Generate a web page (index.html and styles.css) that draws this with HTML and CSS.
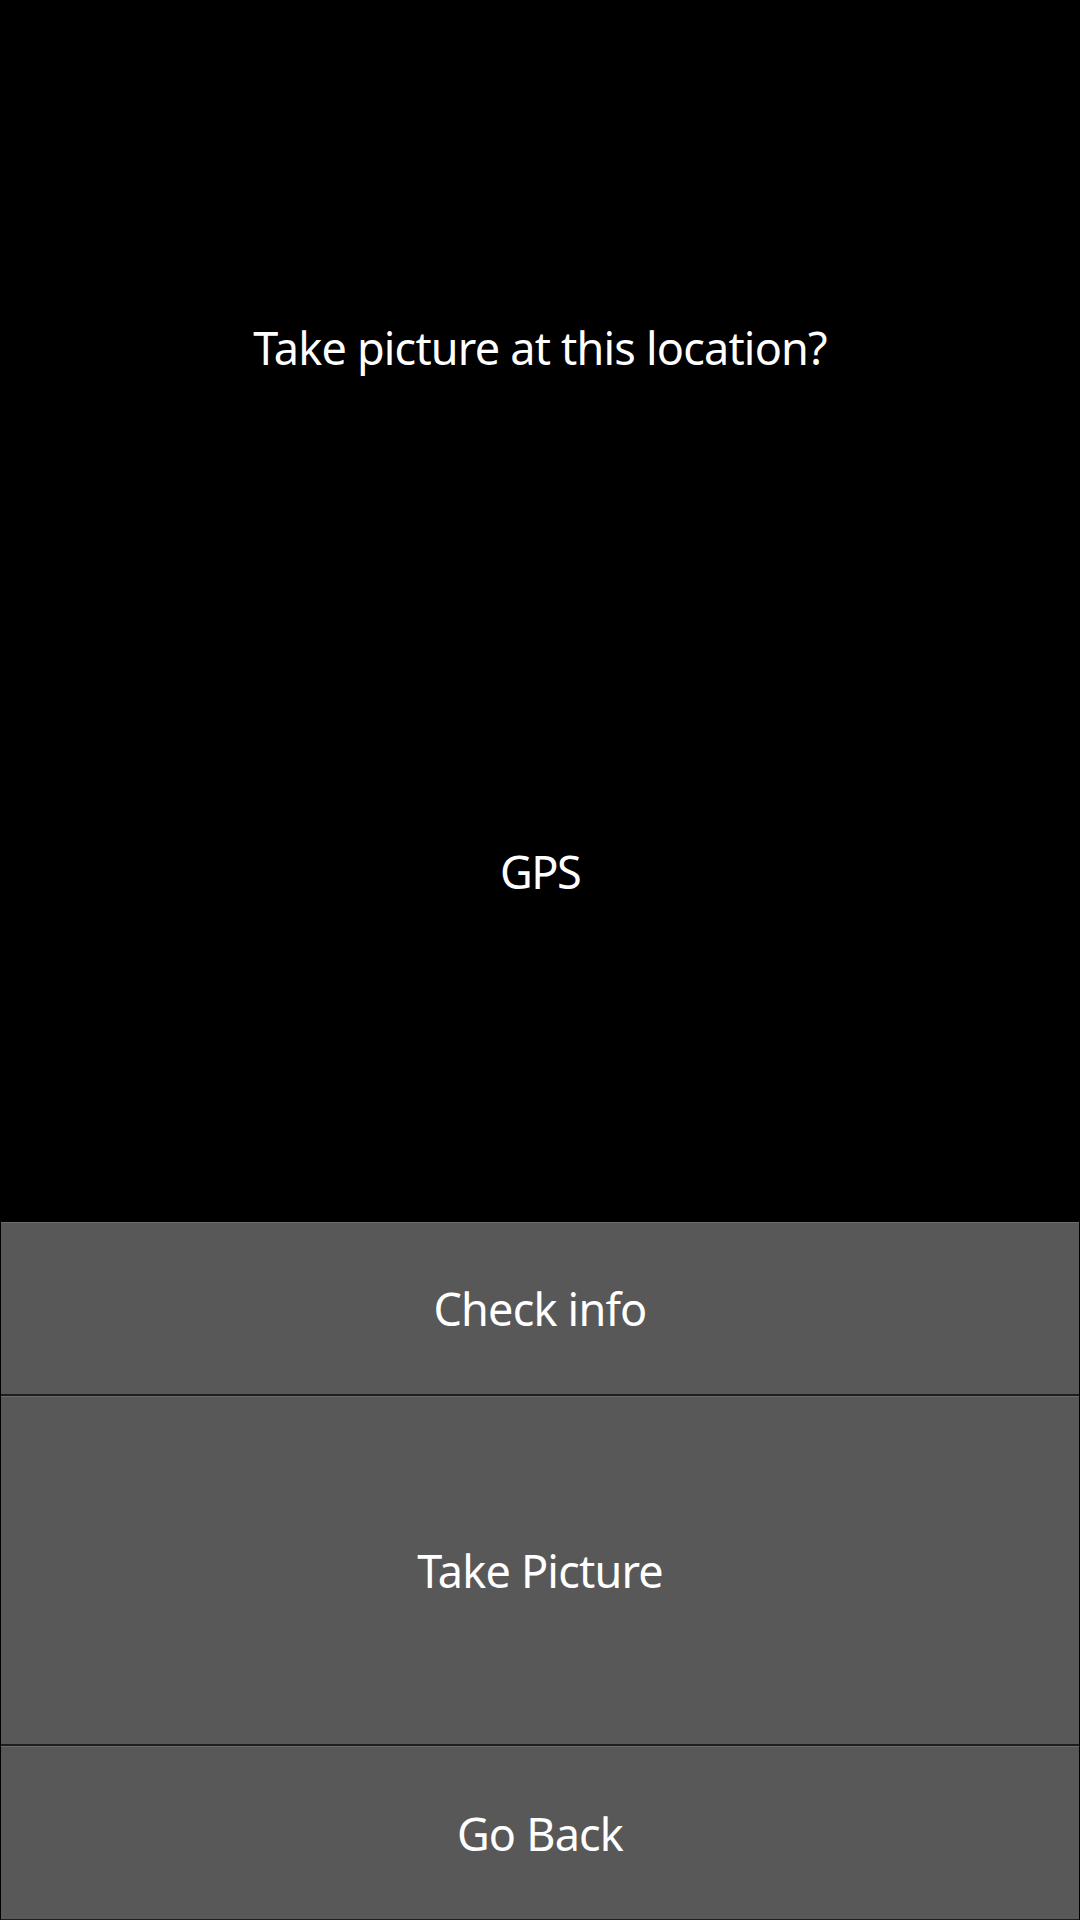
FILE: index.html
```html
<!DOCTYPE html>
<html>
<head>
<meta charset="utf-8">
<link rel="stylesheet" href="styles.css">
</head>
<body>
<div class="screen">
  <div class="info">
    <div class="title">Take picture at this location?</div>
    <div class="gps">GPS</div>
  </div>
  <div class="buttons">
    <div class="btn btn-small">Check info</div>
    <div class="btn btn-large">Take Picture</div>
    <div class="btn btn-small btn-last">Go Back</div>
  </div>
</div>
</body>
</html>
```
FILE: styles.css
```css
html, body {
  margin: 0;
  padding: 0;
  background: #000;
}
.screen {
  width: 1080px;
  height: 1920px;
  display: flex;
  flex-direction: column;
  font-family: "Noto Sans", "Open Sans", sans-serif;
  color: #fff;
  letter-spacing: -0.8px;
}
.info {
  height: 1222px;
  display: flex;
  flex-direction: column;
  align-items: center;
}
.title {
  font-size: 45px;
  line-height: 64px;
  margin-top: 316px;
}
.gps {
  font-size: 45px;
  line-height: 64px;
  margin-top: 460px;
  letter-spacing: -1.5px;
}
.buttons {
  display: flex;
  flex-direction: column;
  padding: 0 1px 0 1px;
}
.btn {
  box-sizing: border-box;
  background: #585858;
  border-top: 1px solid #6c6c6c;
  border-bottom: 2px solid #1e1e1e;
  display: flex;
  align-items: center;
  justify-content: center;
  font-size: 45px;
}
.btn-small {
  height: 174px;
}
.btn-large {
  height: 350px;
}
.btn-last {
  height: 174px;
  border-bottom: 1px solid #1e1e1e;
}
```
